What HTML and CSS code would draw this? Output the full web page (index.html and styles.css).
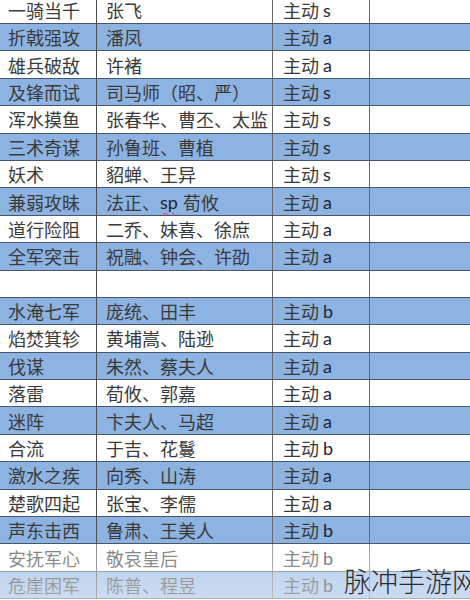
FILE: index.html
```html
<!DOCTYPE html>
<html lang="zh">
<head>
<meta charset="utf-8">
<link rel="stylesheet" href="styles.css">
</head>
<body>
<div class="sheet">
  <div class="row"><div class="c c1">一骑当千</div><div class="c c2">张飞</div><div class="c c3">主动 <span class="g">s</span></div><div class="c c4"></div></div>
  <div class="row blue"><div class="c c1">折戟强攻</div><div class="c c2">潘凤</div><div class="c c3">主动 <span class="g">a</span></div><div class="c c4"></div></div>
  <div class="row"><div class="c c1">雄兵破敌</div><div class="c c2">许褚</div><div class="c c3">主动 <span class="g">a</span></div><div class="c c4"></div></div>
  <div class="row blue"><div class="c c1">及锋而试</div><div class="c c2">司马师（昭、严）</div><div class="c c3">主动 <span class="g">s</span></div><div class="c c4"></div></div>
  <div class="row"><div class="c c1">浑水摸鱼</div><div class="c c2">张春华、曹丕、太监</div><div class="c c3">主动 <span class="g">s</span></div><div class="c c4"></div></div>
  <div class="row blue"><div class="c c1">三术奇谋</div><div class="c c2">孙鲁班、曹植</div><div class="c c3">主动 <span class="g">s</span></div><div class="c c4"></div></div>
  <div class="row"><div class="c c1">妖术</div><div class="c c2">貂蝉、王异</div><div class="c c3">主动 <span class="g">s</span></div><div class="c c4"></div></div>
  <div class="row blue"><div class="c c1">兼弱攻昧</div><div class="c c2">法正、<span class="sp">sp</span> 荀攸</div><div class="c c3">主动 <span class="g">a</span></div><div class="c c4"></div></div>
  <div class="row"><div class="c c1">道行险阻</div><div class="c c2">二乔、妹喜、徐庶</div><div class="c c3">主动 <span class="g">a</span></div><div class="c c4"></div></div>
  <div class="row blue"><div class="c c1">全军突击</div><div class="c c2">祝融、钟会、许劭</div><div class="c c3">主动 <span class="g">a</span></div><div class="c c4"></div></div>
  <div class="row"><div class="c c1"></div><div class="c c2"></div><div class="c c3"></div><div class="c c4"></div></div>
  <div class="row blue"><div class="c c1">水淹七军</div><div class="c c2">庞统、田丰</div><div class="c c3">主动 <span class="g">b</span></div><div class="c c4"></div></div>
  <div class="row"><div class="c c1">焰焚箕轸</div><div class="c c2">黄埔嵩、陆逊</div><div class="c c3">主动 <span class="g">a</span></div><div class="c c4"></div></div>
  <div class="row blue"><div class="c c1">伐谋</div><div class="c c2">朱然、蔡夫人</div><div class="c c3">主动 <span class="g">a</span></div><div class="c c4"></div></div>
  <div class="row"><div class="c c1">落雷</div><div class="c c2">荀攸、郭嘉</div><div class="c c3">主动 <span class="g">a</span></div><div class="c c4"></div></div>
  <div class="row blue"><div class="c c1">迷阵</div><div class="c c2">卞夫人、马超</div><div class="c c3">主动 <span class="g">a</span></div><div class="c c4"></div></div>
  <div class="row"><div class="c c1">合流</div><div class="c c2">于吉、花鬘</div><div class="c c3">主动 <span class="g">b</span></div><div class="c c4"></div></div>
  <div class="row blue"><div class="c c1">激水之疾</div><div class="c c2">向秀、山涛</div><div class="c c3">主动 <span class="g">a</span></div><div class="c c4"></div></div>
  <div class="row"><div class="c c1">楚歌四起</div><div class="c c2">张宝、李儒</div><div class="c c3">主动 <span class="g">a</span></div><div class="c c4"></div></div>
  <div class="row blue"><div class="c c1">声东击西</div><div class="c c2">鲁肃、王美人</div><div class="c c3">主动 <span class="g">b</span></div><div class="c c4"></div></div>
  <div class="row"><div class="c c1">安抚军心</div><div class="c c2">敬哀皇后</div><div class="c c3">主动 <span class="g">b</span></div><div class="c c4"></div></div>
  <div class="row blue"><div class="c c1">危崖困军</div><div class="c c2">陈普、程昱</div><div class="c c3">主动 <span class="g">b</span></div><div class="c c4"></div></div>
</div>
<div class="fade"></div>
<div class="mark">脉冲手游网</div>
</body>
</html>
```

FILE: styles.css
```css
html, body {
  margin: 0;
  padding: 0;
  background: #ffffff;
  overflow: hidden;
  width: 470px;
  height: 600px;
}
body {
  position: relative;
  font-family: "Noto Sans CJK SC", "Noto Sans", sans-serif;
  color: #3a3a3a;
}
.sheet {
  margin-top: -3.4px;
  width: 480px;
}
.row {
  display: flex;
  height: 27.4px;
  box-sizing: border-box;
  border-bottom: 1px solid #4a5566;
}
.row.blue {
  background: #8db3e2;
}
.c {
  box-sizing: border-box;
  display: flex;
  align-items: center;
  padding-left: 8px;
  font-size: 18px;
  line-height: 1;
  white-space: nowrap;
  overflow: hidden;
}
.c1 { width: 97px; border-right: 1px solid #4d4d4d; }
.c2 { width: 176px; border-right: 1px solid #6a6a6a; padding-left: 9px; }
.c3 { width: 97px; border-right: 1px solid #6a6a6a; padding-left: 10px; }
.c4 { flex: 1; }
.g {
  font-family: "Lato", "Open Sans", sans-serif;
  font-size: 18px;
  color: #1e2633;
  margin-left: 4px;
}
.sp {
  font-family: "Lato", "Open Sans", sans-serif;
  color: #1e2633;
  text-decoration: underline wavy #d0306a;
  text-decoration-thickness: 1px;
  text-underline-offset: 3px;
  margin-right: 5px;
}
.fade {
  position: absolute;
  left: 0;
  top: 544px;
  width: 470px;
  height: 56px;
  background: linear-gradient(to bottom, rgba(255,255,255,0.35), rgba(255,255,255,0.55));
}
.mark {
  position: absolute;
  left: 344px;
  top: 565px;
  font-family: "Noto Sans CJK SC", sans-serif;
  font-weight: 300;
  font-size: 27px;
  line-height: 32px;
  color: #2a2a2a;
  white-space: nowrap;
}
```
